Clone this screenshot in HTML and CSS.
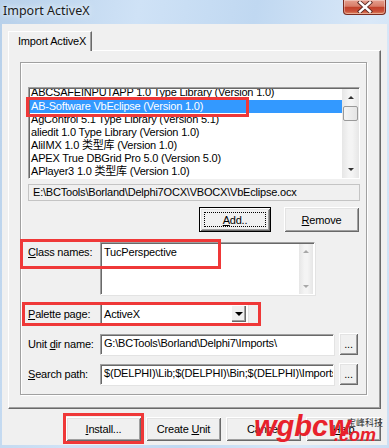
FILE: index.html
```html
<!DOCTYPE html>
<html lang="en">
<head>
    <meta charset="UTF-8">
    <title>Import ActiveX</title>
    <link rel="stylesheet" href="styles.css">
</head>
<body>
    <div class="window">
        <div class="titlebar">
            <span class="title">Import ActiveX</span>
            <span class="close">
                <svg width="16" height="12" viewBox="0 0 16 12">
                    <path d="M3 1.5 L13 10.5 M13 1.5 L3 10.5" stroke="#5a2a24" stroke-width="4.2" stroke-linecap="square"/>
                    <path d="M3 1.5 L13 10.5 M13 1.5 L3 10.5" stroke="#fff" stroke-width="2.4" stroke-linecap="square"/>
                </svg>
            </span>
        </div>

        <div class="client">
            <div class="tab">Import ActiveX</div>
            <div class="page">
                <div class="group">
                    <div class="list">
                        <div class="items">
                            <div class="item">ABCSAFEINPUTAPP 1.0 Type Library (Version 1.0)</div>
                            <div class="item selected">AB-Software VbEclipse (Version 1.0)</div>
                            <div class="item">AgControl 5.1 Type Library (Version 5.1)</div>
                            <div class="item">aliedit 1.0 Type Library (Version 1.0)</div>
                            <div class="item">AliIMX 1.0 类型库 (Version 1.0)</div>
                            <div class="item">APEX True DBGrid Pro 5.0 (Version 5.0)</div>
                            <div class="item">APlayer3 1.0 类型库 (Version 1.0)</div>
                        </div>
                        <div class="vscroll">
                            <div class="arrow-btn"><span class="tri up"></span></div>
                            <div class="thumb"></div>
                            <div class="track"></div>
                            <div class="arrow-btn"><span class="tri down"></span></div>
                        </div>
                    </div>

                    <div class="path">E:\BCTools\Borland\Delphi7OCX\VBOCX\VbEclipse.ocx</div>

                    <div class="pkg-buttons">
                        <button class="btn default"><span class="focus"><u>A</u>dd..</span></button>
                        <button class="btn"><u>R</u>emove</button>
                    </div>

                    <div class="row memo-row">
                        <label class="lbl"><u>C</u>lass names:</label>
                        <div class="memo">
                            <div class="memo-text">TucPerspective</div>
                            <div class="vscroll small">
                                <div class="arrow-btn"><span class="tri up gray"></span></div>
                                <div class="track"></div>
                                <div class="arrow-btn"><span class="tri down gray"></span></div>
                            </div>
                        </div>
                    </div>

                    <div class="row palette-row">
                        <label class="lbl"><u>P</u>alette page:</label>
                        <div class="combo">
                            <span class="combo-text">ActiveX</span>
                            <span class="drop"><span class="tri down"></span></span>
                        </div>
                    </div>

                    <div class="row unit-row">
                        <label class="lbl">Unit <u>d</u>ir name:</label>
                        <div class="edit">G:\BCTools\Borland\Delphi7\Imports\</div>
                        <button class="btn dots">...</button>
                    </div>

                    <div class="row search-row">
                        <label class="lbl"><u>S</u>earch path:</label>
                        <div class="edit">$(DELPHI)\Lib;$(DELPHI)\Bin;$(DELPHI)\Imports;$(DELPHI)\Projects\Bpl</div>
                        <button class="btn dots">...</button>
                    </div>
                </div>
            </div>

            <div class="dialog-buttons">
                <button class="btn wide"><u>I</u>nstall...</button>
                <button class="btn wide">Create <u>U</u>nit</button>
                <button class="btn wide">Cancel</button>
                <button class="btn wide"><u>H</u>elp</button>
            </div>
        </div>

        <!-- annotation boxes drawn over the dialog -->
        <div class="mark mark-list"></div>
        <div class="mark mark-class"></div>
        <div class="mark mark-palette"></div>
        <div class="mark mark-install"></div>

        <div class="watermark">
            <span class="wm-cn">宝峰科技</span>
            <span class="wm-main">wgbcw</span><span class="wm-com">.com</span>
        </div>
    </div>
</body>
</html>
```

FILE: styles.css
```css
body {
    margin: 0;
    font-family: "Liberation Sans", "Noto Sans CJK SC", sans-serif;
    font-size: 11px;
    letter-spacing: -0.2px;
    color: #000;
}
.window {
    position: relative;
    width: 389px;
    height: 448px;
    overflow: hidden;
    background: linear-gradient(100deg, #b7d0ea 0%, #cfe2f6 30%, #c0d8f1 55%, #d9e8f8 80%, #c9def4 100%);
}
.titlebar {
    height: 24px;
    display: flex;
    justify-content: space-between;
    align-items: flex-start;
}
.title {
    font-family: "Noto Sans", sans-serif;
    font-size: 12.5px;
    letter-spacing: 0;
    color: #1a1a1a;
    padding: 2px 0 0 3px;
    text-shadow: 0 0 4px #e8f2fc, 0 0 8px #e8f2fc;
}
.close {
    width: 43px;
    height: 15px;
    margin-right: 3px;
    box-sizing: border-box;
    border: 1px solid #7a2b20;
    border-top: none;
    border-radius: 0 0 4px 4px;
    background: linear-gradient(#e6a08f, #d77c68 45%, #c2412a 52%, #c9503a 80%, #e08a62);
    box-shadow: inset 0 0 0 1px rgba(255,255,255,0.35);
    display: flex;
    align-items: center;
    justify-content: center;
}
.client {
    margin: 0 2px;
    height: 421px;
    box-sizing: border-box;
    background: #f0f0f0;
    padding: 7px 6px 0 6px;
}

/* tab control */
.tab {
    position: relative;
    z-index: 1;
    width: 84px;
    height: 20px;
    box-sizing: border-box;
    margin-bottom: -1px;
    padding: 3px 0 0 9px;
    background: #f0f0f0;
    border-top: 1px solid #fff;
    border-left: 1px solid #fff;
    border-right: 1px solid #696969;
    box-shadow: inset -1px 0 #a0a0a0;
}
.page {
    width: 373px;
    height: 359px;
    box-sizing: border-box;
    padding: 11px 0 0 11px;
    border-top: 1px solid #fff;
    border-left: 1px solid #fff;
    border-right: 1px solid #696969;
    border-bottom: 1px solid #696969;
    box-shadow: inset -1px -1px #a0a0a0;
}
.group {
    width: 347px;
    height: 333px;
    box-sizing: border-box;
    padding: 24px 0 0 7px;
    border: 1px solid #a0a0a0;
    box-shadow: inset 1px 1px #fff, 1px 1px #fff;
}

/* list box */
.list {
    width: 332px;
    height: 92px;
    box-sizing: border-box;
    display: flex;
    border-top: 1px solid #a0a0a0;
    border-left: 1px solid #a0a0a0;
    border-right: 1px solid #fff;
    border-bottom: 1px solid #fff;
    box-shadow: inset 1px 1px #696969;
    background: #fff;
}
.items {
    flex: 1;
    overflow: hidden;
    padding: 0 0 0 1px;
    margin-top: 1px;
}
.item {
    height: 13px;
    line-height: 13px;
    padding-left: 1px;
    white-space: nowrap;
}
.item:first-child {
    margin-top: -3px;
    height: 14px;
}
.selected {
    background: #3399ff;
    color: #fff;
}
.vscroll {
    width: 17px;
    display: flex;
    flex-direction: column;
    background: linear-gradient(to right, #e6e6e6, #f4f4f4 40%, #f4f4f4 60%, #e6e6e6);
    margin: 1px 0 0 0;
}
.arrow-btn {
    height: 17px;
    display: flex;
    align-items: center;
    justify-content: center;
}
.track {
    flex: 1;
}
.thumb {
    height: 15px;
    margin: 0 1px;
    box-sizing: border-box;
    border: 1px solid #9a9a9a;
    border-radius: 2px;
    background: linear-gradient(to right, #f4f4f4, #e4e4e4);
}
.tri {
    width: 0;
    height: 0;
    border-left: 3px solid transparent;
    border-right: 3px solid transparent;
}
.tri.up { border-bottom: 3px solid #333; }
.tri.down { border-top: 3px solid #333; }
.tri.up.gray { border-bottom-color: #a8a8a8; }
.tri.down.gray { border-top-color: #a8a8a8; }

.path {
    width: 332px;
    height: 17px;
    box-sizing: border-box;
    margin-top: 5px;
    padding-left: 4px;
    line-height: 15px;
    border: 1px solid #c4c4c4;
    color: #000;
}

/* buttons */
.btn {
    height: 25px;
    width: 75px;
    box-sizing: border-box;
    padding: 0;
    border: none;
    background: #f0f0f0;
    font: inherit;
    letter-spacing: inherit;
    color: #000;
    box-shadow: inset 1px 1px #fff, inset -1px -1px #696969, inset 2px 2px #e3e3e3, inset -2px -2px #a0a0a0;
}
.btn.default {
    width: 72px;
    border: 1px solid #000;
    display: flex;
    align-items: center;
    justify-content: center;
}
.focus {
    width: 62px;
    height: 15px;
    line-height: 15px;
    box-sizing: border-box;
    border: 1px dotted #000;
}
.pkg-buttons {
    width: 332px;
    margin-top: 6px;
    padding-right: 1px;
    box-sizing: border-box;
    display: flex;
    justify-content: flex-end;
    gap: 13px;
}

/* labelled rows */
.row {
    display: flex;
    align-items: center;
}
.lbl {
    width: 72px;
    white-space: nowrap;
}
.memo-row {
    align-items: flex-start;
    margin-top: 10px;
}
.memo-row .lbl {
    padding-top: 4px;
}
.memo {
    width: 215px;
    height: 53px;
    box-sizing: border-box;
    display: flex;
    background: #fff;
    border-top: 1px solid #a0a0a0;
    border-left: 1px solid #a0a0a0;
    border-right: 1px solid #fff;
    border-bottom: 1px solid #fff;
    box-shadow: inset 1px 1px #696969, 1px 1px #e3e3e3;
}
.memo-text {
    flex: 1;
    padding: 3px 0 0 3px;
    line-height: 13px;
}
.vscroll.small {
    width: 14px;
    margin: 1px 1px 0 0;
}
.vscroll.small .arrow-btn {
    height: 15px;
}
.palette-row {
    margin-top: 8px;
}
.combo {
    width: 148px;
    height: 21px;
    box-sizing: border-box;
    display: flex;
    align-items: center;
    background: #fff;
    border-top: 1px solid #a0a0a0;
    border-left: 1px solid #a0a0a0;
    border-right: 1px solid #fff;
    border-bottom: 1px solid #fff;
    box-shadow: inset 1px 1px #696969, 1px 1px #e3e3e3;
}
.combo-text {
    flex: 1;
    padding-left: 3px;
}
.drop {
    width: 15px;
    height: 17px;
    margin-right: 1px;
    display: flex;
    align-items: center;
    justify-content: center;
    background: #f0f0f0;
    box-shadow: inset 1px 1px #fff, inset -1px -1px #696969, inset -2px -2px #a0a0a0;
}
.drop .tri {
    border-left-width: 4px;
    border-right-width: 4px;
    border-top-width: 4px;
    border-top-color: #000;
}
.unit-row {
    margin-top: 9px;
}
.search-row {
    margin-top: 8px;
}
.edit {
    width: 234px;
    height: 21px;
    box-sizing: border-box;
    padding-left: 3px;
    line-height: 17px;
    overflow: hidden;
    white-space: nowrap;
    background: #fff;
    border-top: 1px solid #a0a0a0;
    border-left: 1px solid #a0a0a0;
    border-right: 1px solid #fff;
    border-bottom: 1px solid #fff;
    box-shadow: inset 1px 1px #696969, 1px 1px #e3e3e3;
}
.btn.dots {
    width: 19px;
    height: 22px;
    margin-left: 5px;
}

.dialog-buttons {
    margin-top: 8px;
    display: flex;
    justify-content: flex-end;
    gap: 5px;
}
.btn.wide {
    height: 24px;
}

/* red annotation rectangles */
.mark {
    position: absolute;
    box-sizing: border-box;
    border: 3px solid #ef3838;
}
.mark-list { left: 26px; top: 97px; width: 223px; height: 20px; }
.mark-class { left: 20px; top: 239px; width: 201px; height: 30px; }
.mark-palette { left: 22px; top: 302px; width: 239px; height: 24px; }
.mark-install { left: 63px; top: 413px; width: 81px; height: 31px; }

.watermark {
    position: absolute;
    left: 254px;
    top: 408px;
    width: 133px;
    height: 40px;
    color: #e8212b;
    font-weight: bold;
    font-style: italic;
    letter-spacing: 0;
}
.wm-cn {
    position: absolute;
    left: 93px;
    top: 8px;
    font-size: 9px;
    font-weight: normal;
    font-style: normal;
    color: #333;
    white-space: nowrap;
}
.wm-main {
    position: absolute;
    left: 0;
    top: 0;
    font-size: 29px;
    line-height: 36px;
}
.wm-com {
    position: absolute;
    left: 80px;
    top: 16px;
    font-size: 18px;
    line-height: 22px;
}
```
